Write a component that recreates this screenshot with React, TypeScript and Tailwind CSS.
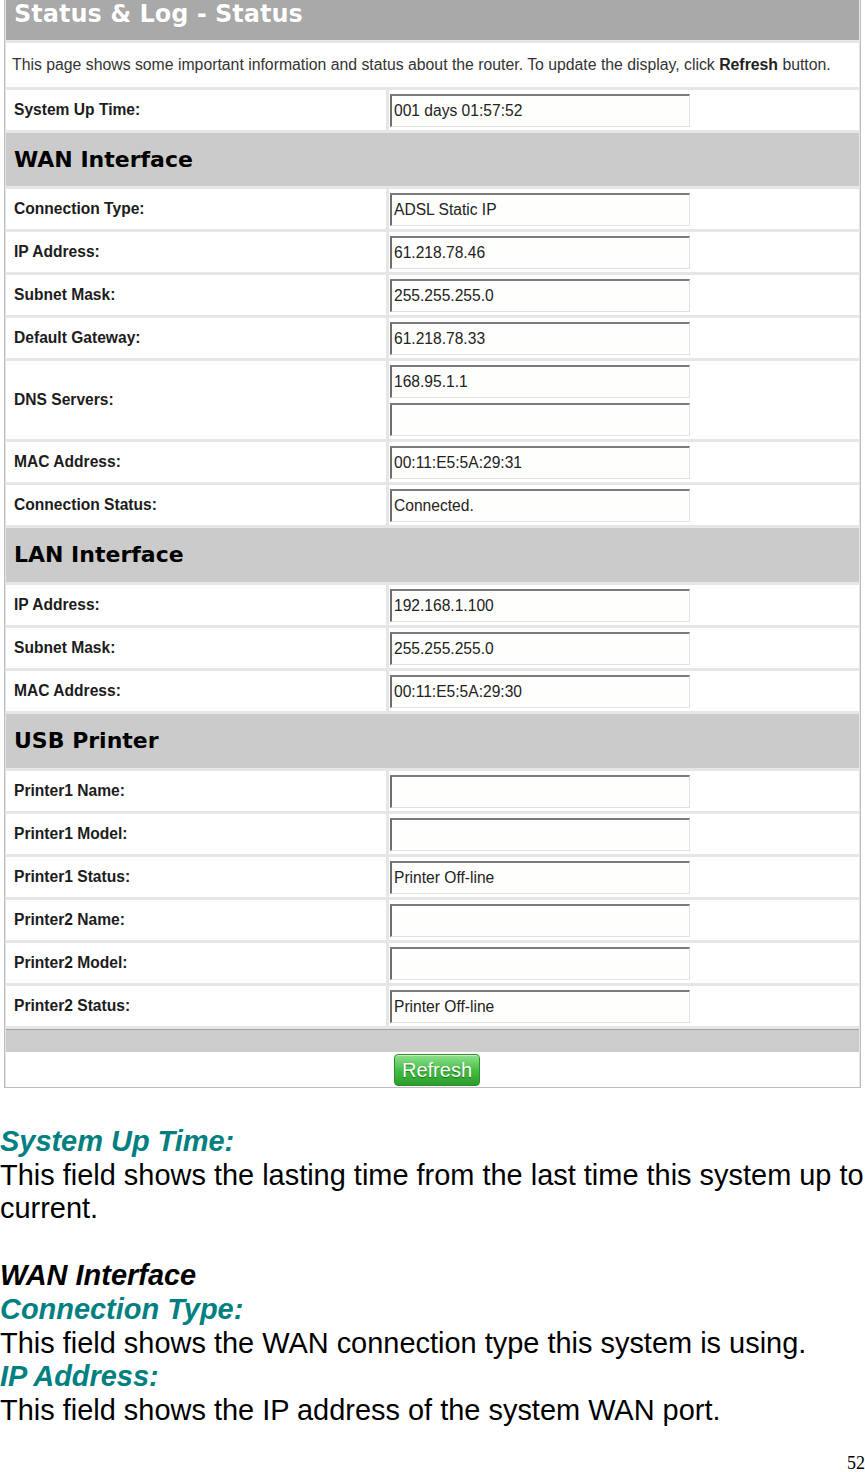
import React from "react";

const arial = { fontFamily: '"Liberation Sans", Arial, sans-serif' };

function Field({ value }: { value: string }) {
  return (
    <input
      readOnly
      value={value}
      className="h-[33px] w-[300px] border-t-2 border-l-2 border-r border-b border-t-[#7b7b7b] border-l-[#6e6e6e] border-r-[#e2e2e2] border-b-[#e2e2e2] bg-[#fefefc] pl-[2px] text-[15.6px] text-[#222] outline-none"
      style={arial}
    />
  );
}

function Row({ label, values, tall }: { label: string; values: string[]; tall?: boolean }) {
  return (
    <div className={`grid grid-cols-[380px_1fr] gap-[3px] ${tall ? "h-[78px]" : "h-[40px]"}`}>
      <div className="flex items-center bg-white pl-2 text-[15.6px] font-bold text-[#1c1c1c]" style={arial}>
        {label}
      </div>
      <div className="flex flex-col justify-center gap-[5px] bg-white pl-[1px]">
        {values.map((v, i) => (
          <Field key={i} value={v} />
        ))}
      </div>
    </div>
  );
}

function Section({ title, tall }: { title: string; tall?: boolean }) {
  return (
    <div
      className={`flex items-center bg-[#cbcbcb] pl-2 text-[22px] font-bold leading-none text-black ${tall ? "h-[54px]" : "h-[53px]"}`}
      style={{ fontFamily: '"DejaVu Sans", Verdana, sans-serif' }}
    >
      {title}
    </div>
  );
}

export default function App() {
  return (
    <div className="h-[1472px] w-[865px] overflow-hidden bg-white">
      <div className="ml-[4px] flex w-[857px] flex-col gap-[3px] border border-t-0 border-[#bcbcbc] bg-[#e6e6e6] px-[1px]">
        <div
          className="h-[40px] bg-[#a9a9a9] pl-2 pt-[1px] text-[24px] font-bold leading-[26px] text-white [text-shadow:0_0_1px_rgba(0,0,0,0.15)]"
          style={{ fontFamily: '"DejaVu Sans", Verdana, sans-serif' }}
        >
          Status &amp; Log - Status
        </div>
        <div className="flex h-[44px] items-center bg-white pl-[6px] text-[15.8px] text-[#333]" style={arial}>
          <span>
            This page shows some important information and status about the router. To update the display, click{" "}
            <b className="text-[#222]">Refresh</b> button.
          </span>
        </div>
        <Row label="System Up Time:" values={["001 days 01:57:52"]} />

        <Section title="WAN Interface" />
        <Row label="Connection Type:" values={["ADSL Static IP"]} />
        <Row label="IP Address:" values={["61.218.78.46"]} />
        <Row label="Subnet Mask:" values={["255.255.255.0"]} />
        <Row label="Default Gateway:" values={["61.218.78.33"]} />
        <Row label="DNS Servers:" values={["168.95.1.1", ""]} tall />
        <Row label="MAC Address:" values={["00:11:E5:5A:29:31"]} />
        <Row label="Connection Status:" values={["Connected."]} />

        <Section title="LAN Interface" tall />
        <Row label="IP Address:" values={["192.168.1.100"]} />
        <Row label="Subnet Mask:" values={["255.255.255.0"]} />
        <Row label="MAC Address:" values={["00:11:E5:5A:29:30"]} />

        <Section title="USB Printer" tall />
        <Row label="Printer1 Name:" values={[""]} />
        <Row label="Printer1 Model:" values={[""]} />
        <Row label="Printer1 Status:" values={["Printer Off-line"]} />
        <Row label="Printer2 Name:" values={[""]} />
        <Row label="Printer2 Model:" values={[""]} />
        <Row label="Printer2 Status:" values={["Printer Off-line"]} />

        <div className="flex flex-col">
          <div className="h-[23px] border-t border-[#a2a2a2] bg-[#cccccc]" />
          <div className="flex h-[35px] items-center bg-white pl-[388px]">
            <button
              className="h-[32px] w-[86px] rounded-[4px] border border-[#2f8f2f] bg-linear-to-b from-[#8fe08f] via-[#45bf45] to-[#2a9d2a] text-[20px] text-white [text-shadow:0_1px_1px_rgba(0,60,0,0.6)] shadow-[inset_0_1px_0_rgba(255,255,255,0.5)]"
              style={arial}
            >
              Refresh
            </button>
          </div>
        </div>
      </div>

      <div className="mt-[37px] text-[28.95px] leading-[33.6px] text-black" style={arial}>
        <div className="font-bold italic text-[#008080]">System Up Time:</div>
        <div>This field shows the lasting time from the last time this system up to current.</div>
        <div className="h-[33.6px]" />
        <div className="font-bold italic">WAN Interface</div>
        <div className="font-bold italic text-[#008080]">Connection Type:</div>
        <div>This field shows the WAN connection type this system is using.</div>
        <div className="font-bold italic text-[#008080]">IP Address:</div>
        <div>This field shows the IP address of the system WAN port.</div>
      </div>

      <div
        className="mt-[26px] text-right text-[18px] leading-[20px] text-black"
        style={{ fontFamily: '"Liberation Serif", "Times New Roman", serif' }}
      >
        52
      </div>
    </div>
  );
}
